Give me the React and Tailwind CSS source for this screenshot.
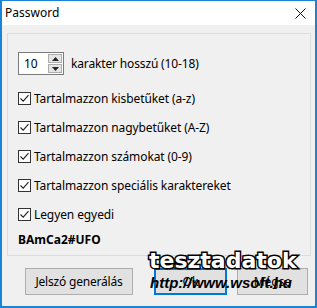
import React from 'react';

const font = { fontFamily: '"Noto Sans", "Open Sans", sans-serif' };

function Check({ label }) {
    return (
        <div className="flex items-center h-[13px] gap-[3px]">
            <div className="w-[13px] h-[13px] border border-[#333] bg-white flex items-center justify-center">
                <svg width="11" height="11" viewBox="0 0 11 11">
                    <path d="M1.5 5.5 L4.2 8.2 L9.5 2.2" fill="none" stroke="#222" strokeWidth="1.1" />
                </svg>
            </div>
            <span className="text-[12px] text-black leading-none tracking-[-0.1px]">{label}</span>
        </div>
    );
}

export default function App() {
    return (
        <div className="w-[317px] h-[308px] relative bg-[#f0f0f0] border-x-2 border-b-2 border-t border-[#1883d7] flex flex-col overflow-hidden" style={font}>
            {/* Title bar */}
            <div className="h-[24px] bg-white flex items-center justify-between pl-[3px] pr-[9px]">
                <span className="text-[12px] text-black">Password</span>
                <svg width="11" height="11" viewBox="0 0 11 11">
                    <path d="M0.5 0.5 L10.5 10.5 M10.5 0.5 L0.5 10.5" stroke="#111" strokeWidth="1" />
                </svg>
            </div>

            {/* Group box */}
            <div className="mt-[8px] ml-[5px] mr-[4px] h-[223px] border border-[#dcdcdc] pl-[10px] pt-[18px]">
                <div className="flex items-center gap-[7px]">
                    <div className="w-[46px] h-[23px] border border-[#7a7a7a] bg-white flex">
                        <span className="flex-1 text-[12px] pl-[5px] leading-[21px]">10</span>
                        <div className="w-[15px] flex flex-col gap-[1px] py-[1px] pr-[1px]">
                            <div className="flex-1 bg-[#e5e5e5] border border-[#acacac] flex items-center justify-center">
                                <svg width="7" height="4" viewBox="0 0 7 4"><path d="M0 4 L3.5 0 L7 4 Z" fill="#222" /></svg>
                            </div>
                            <div className="flex-1 bg-[#e5e5e5] border border-[#acacac] flex items-center justify-center">
                                <svg width="7" height="4" viewBox="0 0 7 4"><path d="M0 0 L7 0 L3.5 4 Z" fill="#222" /></svg>
                            </div>
                        </div>
                    </div>
                    <span className="text-[12px] tracking-[-0.15px]">karakter hosszú (10-18)</span>
                </div>

                <div className="flex flex-col gap-[16px] mt-[17px]">
                    <Check label="Tartalmazzon kisbetűket (a-z)" />
                    <Check label="Tartalmazzon nagybetűket (A-Z)" />
                    <Check label="Tartalmazzon számokat (0-9)" />
                    <Check label="Tartalmazzon speciális karaktereket" />
                    <Check label="Legyen egyedi" />
                </div>

                <div className="mt-[13px] text-[12px] font-bold leading-none">BAmCa2#UFO</div>
            </div>

            {/* Buttons */}
            <div className="flex mt-[12px] pl-[23px] gap-[21px]">
                <div className="w-[108px] h-[27px] bg-[#e1e1e1] border border-[#adadad] flex items-center justify-center text-[12px] tracking-[-0.2px]">Jelszó generálás</div>
                <div className="flex gap-[10px]">
                    <div className="w-[73px] h-[27px] bg-[#e1e1e1] border-2 border-[#0078d7] flex items-center justify-center text-[12px]">Ok</div>
                    <div className="w-[71px] h-[27px] bg-[#e1e1e1] border border-[#adadad] flex items-center justify-center text-[12px]">Mégse</div>
                </div>
            </div>

            {/* Watermark overlay */}
            <div className="absolute left-[147px] top-[249px] text-[22px] font-bold text-white leading-none [-webkit-text-stroke:3px_#000] [paint-order:stroke_fill]" style={{ fontFamily: '"DejaVu Sans", Verdana, sans-serif' }}>
                tesztadatok
            </div>
            <div className="absolute left-[148px] top-[274px] text-[15px] font-bold italic text-black leading-none" style={{ fontFamily: '"Liberation Sans", Arial, sans-serif' }}>
                http://www.wsoft.hu
            </div>
        </div>
    );
}
